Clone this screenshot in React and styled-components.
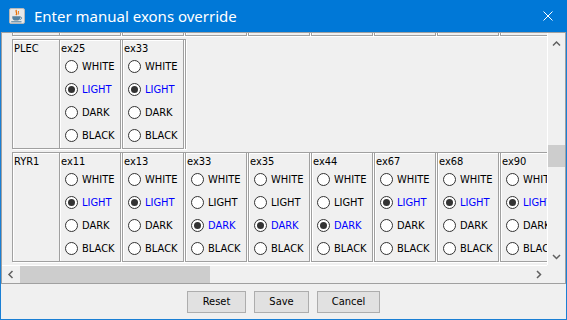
import React from 'react';
import styled, { createGlobalStyle } from 'styled-components';

const Global = createGlobalStyle`
  html, body { margin: 0; padding: 0; background: #f0f0f0; }
  body {
    width: 567px; height: 320px; overflow: hidden;
    font-family: "DejaVu Sans Condensed", "DejaVu Sans", sans-serif;
    font-stretch: semi-condensed;
  }
`;

const Window = styled.div`
  box-sizing: border-box;
  width: 567px;
  height: 320px;
  border: 1px solid #1a7fd4;
  border-top: none;
  display: flex;
  flex-direction: column;
  background: #f0f0f0;
`;

const TitleBar = styled.div`
  height: 32px;
  flex: none;
  background: #0078d7;
  display: flex;
  align-items: center;
  padding-left: 9px;
  margin: 0 -1px;
`;

const TitleText = styled.span`
  margin-left: 9px;
  color: #fff;
  font-family: "Noto Sans", "Open Sans", sans-serif;
  font-stretch: normal;
  font-size: 15px;
  line-height: 18px;
  white-space: nowrap;
`;

const CloseBtn = styled.div`
  margin-left: auto;
  padding-right: 14px;
  display: flex;
  align-items: center;
  height: 100%;
`;

const ScrollPane = styled.div`
  box-sizing: border-box;
  height: 252px;
  flex: none;
  border: 1px solid #a0a0a0;
  display: grid;
  grid-template-columns: 1fr 18px;
  grid-template-rows: 1fr 18px;
`;

const Viewport = styled.div`
  overflow: hidden;
  background: #f0f0f0;
`;

const Content = styled.div`
  padding: 6px 0 0 10px;
  display: flex;
  flex-direction: column;
  gap: 3px;
  width: max-content;
  transform: translateY(${p => -p.$scrollTop}px);
`;

const Row = styled.div`
  box-sizing: border-box;
  height: 110px;
  display: flex;
  align-items: flex-start;
  border: 1px solid #a0a0a0;
  box-shadow: inset 1px 1px 0 #fff, 1px 1px 0 #fff;
  width: max-content;
`;

const GeneCell = styled.div`
  width: 46px;
  padding: 2px 0 0 1px;
  box-sizing: border-box;
  font-size: 11px;
  line-height: 13px;
  color: #000;
  flex: none;
`;

const ExonBox = styled.div`
  box-sizing: border-box;
  height: 110px;
  width: 62px;
  margin: -1px 1px -1px 0;
  border: 1px solid #a0a0a0;
  box-shadow: inset 1px 1px 0 #fff, 1px 1px 0 #fff;
  padding: 2px 0 0 1px;
  flex: none;
`;

const ExonTitle = styled.div`
  font-size: 11px;
  line-height: 13px;
  height: 13px;
  color: #000;
  white-space: nowrap;
`;

const Option = styled.div`
  height: 23px;
  display: flex;
  align-items: center;
  padding-left: 4px;
  gap: 4px;
  white-space: nowrap;
`;

const RadioCircle = styled.span`
  box-sizing: border-box;
  width: 13px;
  height: 13px;
  flex: none;
  border-radius: 50%;
  border: 1px solid #333;
  background: #fff;
  display: flex;
  align-items: center;
  justify-content: center;
  &::after {
    content: "";
    display: ${p => (p.$checked ? 'block' : 'none')};
    width: 7px;
    height: 7px;
    border-radius: 50%;
    background: #333;
  }
`;

const OptionLabel = styled.span`
  font-size: 11px;
  line-height: 13px;
  color: ${p => (p.$checked ? '#0000ff' : '#000')};
`;

const VBar = styled.div`
  border-left: 1px solid #fff;
  background: #f0f0f0;
  display: flex;
  flex-direction: column;
`;

const HBar = styled.div`
  border-top: 1px solid #fff;
  background: #f0f0f0;
  display: flex;
`;

const Corner = styled.div`
  background: #f0f0f0;
`;

const ArrowBtn = styled.div`
  flex: none;
  width: 17px;
  height: 17px;
  display: flex;
  align-items: center;
  justify-content: center;
  box-sizing: border-box;
  padding-top: ${p => p.$padTop || 0}px;
`;

const Track = styled.div`
  flex: 1;
  display: flex;
  flex-direction: ${p => (p.$vertical ? 'column' : 'row')};
`;

const Thumb = styled.div`
  background: #cdcdcd;
  flex: none;
  ${p =>
    p.$vertical
      ? `height: ${p.$size}px; margin-top: ${p.$offset}px; width: 17px;`
      : `width: ${p.$size}px; margin-left: ${p.$offset}px; height: 17px;`}
`;

const ButtonPanel = styled.div`
  flex: 1;
  display: flex;
  justify-content: center;
  align-items: center;
  gap: 8px;
`;

const Button = styled.button`
  box-sizing: border-box;
  width: ${p => p.$w}px;
  height: 22px;
  border: 1px solid #adadad;
  background: #e1e1e1;
  color: #000;
  font-family: "DejaVu Sans Condensed", "DejaVu Sans", sans-serif;
  font-stretch: semi-condensed;
  font-size: 11px;
  padding: 0;
  margin: 0;
  border-radius: 0;
`;

const Chevron = ({ dir }) => {
  const pts = {
    up: '1,5.5 4.5,2 8,5.5',
    down: '1,2 4.5,5.5 8,2',
    left: '5.5,1 2,4.5 5.5,8',
    right: '2,1 5.5,4.5 2,8',
  }[dir];
  const vert = dir === 'up' || dir === 'down';
  return (
    <svg width={vert ? 9 : 7} height={vert ? 7 : 9} viewBox={vert ? '0 0 9 7' : '0 0 7 9'}>
      <polyline points={pts} fill="none" stroke="#606060" strokeWidth="1.5" />
    </svg>
  );
};

const JavaIcon = () => (
  <svg width="16" height="16" viewBox="0 0 16 16">
    <rect x="0.5" y="0.5" width="15" height="15" rx="1.5" fill="#e8e8e8" stroke="#b8b8b8" />
    <path d="M7.5 2 C5.8 3.8 9.2 4.6 7 7.2" fill="none" stroke="#e76f00" strokeWidth="1.3" />
    <path d="M9.7 3 C8.6 4.3 10.4 5 9.1 6.6" fill="none" stroke="#e76f00" strokeWidth="1" />
    <path d="M3.3 8.3 H11.2 V9.4 C11.2 11.5 9.5 12.6 7.25 12.6 C5 12.6 3.3 11.5 3.3 9.4 Z" fill="#5382a1" />
    <path d="M11.1 9 C13.2 8.8 13.2 11.3 10.8 11.5" fill="none" stroke="#5382a1" strokeWidth="1" />
    <path d="M2.2 13.8 H12.5" stroke="#5382a1" strokeWidth="1.1" />
  </svg>
);

const CloseIcon = () => (
  <svg width="10" height="10" viewBox="0 0 10 10">
    <path d="M0.5 0.5 L9.5 9.5 M9.5 0.5 L0.5 9.5" stroke="#fff" strokeWidth="1" />
  </svg>
);

const LEVELS = ['WHITE', 'LIGHT', 'DARK', 'BLACK'];

// The row above PLEC is scrolled out of view; only its bottom edge shows.
const hiddenRowBoxes = 8;

const rows = [
  { gene: 'PLEC', exons: [['ex25', 'LIGHT'], ['ex33', 'LIGHT']] },
  {
    gene: 'RYR1',
    exons: [
      ['ex11', 'LIGHT'], ['ex13', 'LIGHT'], ['ex33', 'DARK'], ['ex35', 'DARK'],
      ['ex44', 'DARK'], ['ex67', 'LIGHT'], ['ex68', 'LIGHT'], ['ex90', 'LIGHT'],
    ],
  },
];

const Exon = ({ name, value }) => (
  <ExonBox>
    <ExonTitle>{name}</ExonTitle>
    {LEVELS.map(l => (
      <Option key={l}>
        <RadioCircle $checked={l === value} />
        <OptionLabel $checked={l === value}>{l}</OptionLabel>
      </Option>
    ))}
  </ExonBox>
);

export default function App() {
  return (
    <>
      <Global />
      <Window>
        <TitleBar>
          <JavaIcon />
          <TitleText>Enter manual exons override</TitleText>
          <CloseBtn>
            <CloseIcon />
          </CloseBtn>
        </TitleBar>
        <ScrollPane>
          <Viewport>
            <Content $scrollTop={113}>
              <Row>
                <GeneCell />
                {Array.from({ length: hiddenRowBoxes }, (_, i) => (
                  <ExonBox key={i} />
                ))}
              </Row>
              {rows.map(r => (
                <Row key={r.gene}>
                  <GeneCell>{r.gene}</GeneCell>
                  {r.exons.map(([n, v]) => (
                    <Exon key={n} name={n} value={v} />
                  ))}
                </Row>
              ))}
            </Content>
          </Viewport>
          <VBar>
            <ArrowBtn $padTop={3}>
              <Chevron dir="up" />
            </ArrowBtn>
            <Track $vertical>
              <Thumb $vertical $size={22} $offset={95} />
            </Track>
            <ArrowBtn>
              <Chevron dir="down" />
            </ArrowBtn>
          </VBar>
          <HBar>
            <ArrowBtn>
              <Chevron dir="left" />
            </ArrowBtn>
            <Track>
              <Thumb $size={190} $offset={1} />
            </Track>
            <ArrowBtn>
              <Chevron dir="right" />
            </ArrowBtn>
          </HBar>
          <Corner />
        </ScrollPane>
        <ButtonPanel>
          <Button $w={59}>Reset</Button>
          <Button $w={55}>Save</Button>
          <Button $w={63}>Cancel</Button>
        </ButtonPanel>
      </Window>
    </>
  );
}
